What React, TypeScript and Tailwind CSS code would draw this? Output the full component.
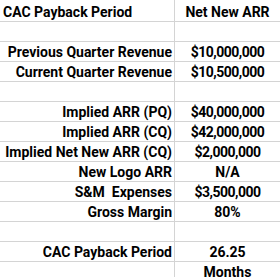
const rows: { label: string; value: string; align?: "left" }[] = [
  { label: "CAC Payback Period", value: "Net New ARR", align: "left" },
  { label: "", value: "" },
  { label: "Previous Quarter Revenue", value: "$10,000,000" },
  { label: "Current Quarter Revenue", value: "$10,500,000" },
  { label: "", value: "" },
  { label: "Implied ARR (PQ)", value: "$40,000,000" },
  { label: "Implied ARR (CQ)", value: "$42,000,000" },
  { label: "Implied Net New ARR (CQ)", value: "$2,000,000" },
  { label: "New Logo ARR", value: "N/A" },
  { label: "S&M\u00a0 Expenses", value: "$3,500,000" },
  { label: "Gross Margin", value: "80%" },
  { label: "", value: "" },
  { label: "CAC Payback Period", value: "26.25" },
  { label: "", value: "Months" },
];

const App = () => {
  return (
    <div className="w-[280px] h-[277px] overflow-hidden bg-white font-['Roboto',sans-serif] font-bold text-[14px] text-black">
      <div className="grid grid-cols-[175px_1fr]">
        {rows.map((row, i) => (
          <div key={i} className="contents">
            <div
              className={`flex items-end pb-[2px] leading-none border-b border-r border-[#d4d4d4] ${
                i === 0 ? "h-[22px]" : "h-[20px]"
              } ${row.align === "left" ? "justify-start pl-[3px]" : "justify-end pr-[2px]"}`}
            >
              {row.label}
            </div>
            <div
              className={`flex items-end justify-center pb-[2px] leading-none border-b border-[#d4d4d4] ${
                i === 0 ? "h-[22px]" : "h-[20px]"
              } ${row.value.startsWith("$") ? "tracking-[-0.5px]" : ""}`}
            >
              {row.value}
            </div>
          </div>
        ))}
      </div>
    </div>
  );
};

export default App;
